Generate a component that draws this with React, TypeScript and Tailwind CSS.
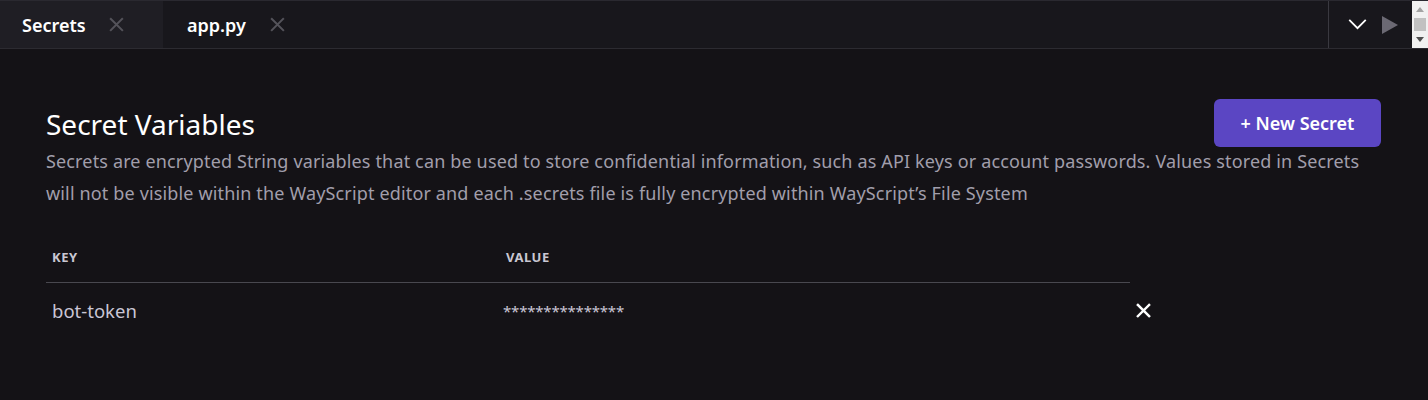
import React from "react";

const font = { fontFamily: '"Noto Sans", "Open Sans", sans-serif' };

function XIcon({ className, sw = 2 }: { className?: string; sw?: number }) {
  return (
    <svg viewBox="0 0 16 16" className={className} fill="none" stroke="currentColor" strokeWidth={sw} strokeLinecap="square">
      <path d="M2 2L14 14M14 2L2 14" />
    </svg>
  );
}

export default function App() {
  return (
    <div className="w-[1428px] h-[400px] bg-[#141216] text-white overflow-hidden" style={font}>
      {/* Tab bar */}
      <div className="flex h-[49px] bg-[#18171c] border-t border-t-[#2a2930] border-b border-b-[#2c2b31]">
        <div className="flex items-center w-[163px] bg-[#1f1e24] pl-[22px]">
          <span className="text-[18px] font-semibold text-white leading-none">Secrets</span>
          <XIcon className="w-[15px] h-[15px] ml-[23px] text-[#54535a]" sw={2.2} />
        </div>
        <div className="flex items-center pl-[24px]">
          <span className="text-[18px] font-semibold text-white leading-none">app.py</span>
          <XIcon className="w-[15px] h-[15px] ml-[24px] text-[#54535a]" sw={2.2} />
        </div>
        <div className="flex-1" />
        <div className="flex items-center border-l border-l-[#3a3940] h-full pl-[19px] pr-[14px] gap-[15px]">
          <svg viewBox="0 0 20 12" className="w-[19px] h-[11px]" fill="none" stroke="#ffffff" strokeWidth={2}>
            <path d="M1 1L10 10L19 1" />
          </svg>
          <svg viewBox="0 0 16 18" className="w-[16px] h-[18px]" fill="#6b6973">
            <path d="M0 0L16 9L0 18Z" />
          </svg>
        </div>
        <div className="w-[16px] h-full bg-[#f1f1f1] flex flex-col items-center justify-between py-[4px]">
          <svg viewBox="0 0 8 5" className="w-[8px] h-[5px] mt-[2px]" fill="#a3a3a3"><path d="M0 5L4 0L8 5Z" /></svg>
          <div className="w-[12px] h-[13px] bg-[#c1c1c1]" />
          <svg viewBox="0 0 8 5" className="w-[8px] h-[5px] mb-[2px]" fill="#505050"><path d="M0 0L4 5L8 0Z" /></svg>
        </div>
      </div>

      {/* Content */}
      <div className="pl-[46px] pr-[47px] pt-[50px]">
        <div className="flex justify-between items-start">
          <h1 className="text-[28px] leading-none mt-[11px] text-white">Secret Variables</h1>
          <button className="w-[167px] h-[48px] rounded-[6px] bg-[#5b46c3] text-white text-[18px] font-semibold leading-none">
            + New Secret
          </button>
        </div>
        <p className="text-[18px] leading-[32px] text-[#a19eab] mt-[-2px] tracking-[0.15px]">
          Secrets are encrypted String variables that can be used to store confidential information, such as API keys or account passwords. Values stored in Secrets will not be visible within the WayScript editor and each .secrets file is fully encrypted within WayScript’s File System
        </p>

        <div className="mt-[30px] w-[1084px]">
          <div className="flex h-[44px] items-center border-b border-b-[#49484f] text-[13px] font-bold tracking-[0.5px] text-[#c9c7d2]">
            <div className="w-[460px] pl-[6px] pb-[6px]">KEY</div>
            <div className="pl-[0px] pb-[6px]">VALUE</div>
          </div>
          <div className="flex items-center h-[56px] text-[18.5px] text-[#cac6d5] relative">
            <div className="w-[457px] pl-[6px]">bot-token</div>
            <div className="text-[15px] tracking-[-0.2px]">***************</div>
            <XIcon className="absolute left-[1090px] top-[20px] w-[15px] h-[15px] text-white" sw={2.6} />
          </div>
        </div>
      </div>
    </div>
  );
}
